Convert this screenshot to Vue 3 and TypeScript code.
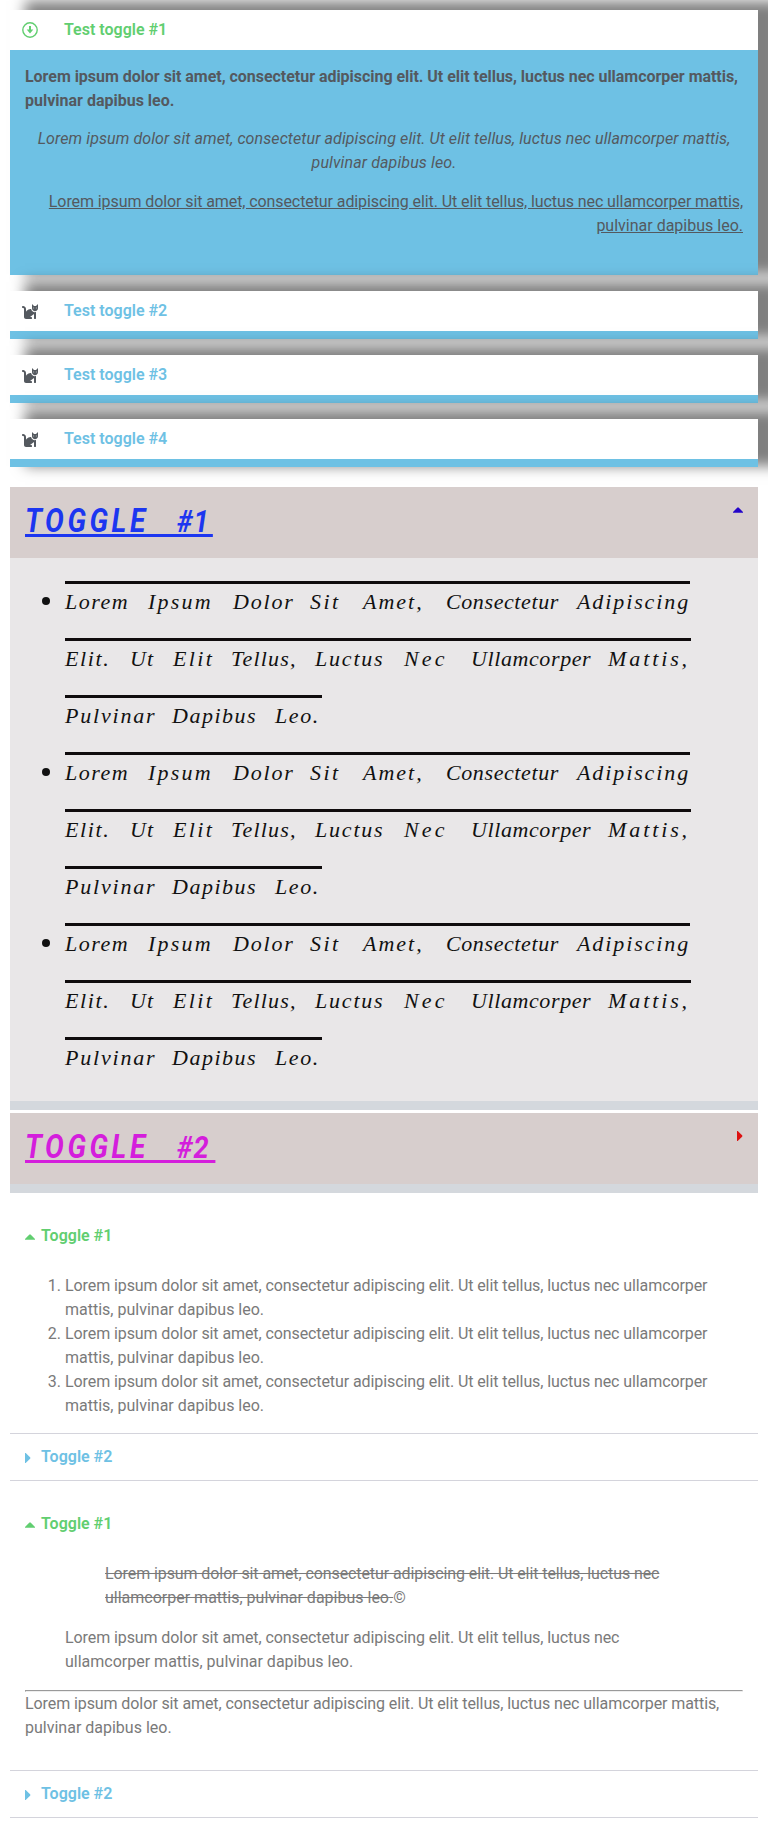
<script setup lang="ts">
const lorem =
  'Lorem ipsum dolor sit amet, consectetur adipiscing elit. Ut elit tellus, luctus nec ullamcorper mattis, pulvinar dapibus leo.'

const closed = ['Test toggle #2', 'Test toggle #3', 'Test toggle #4']

interface Word { text: string; slot: number; gap: number }
interface Line { width: number; words: Word[] }

const w = (text: string, slot: number, gap: number): Word => ({ text, slot, gap })

// slot: distance to the next word; gap: letter spacing
const lines: Line[] = [
  {
    width: 625,
    words: [w('Lorem', 83, 1.5), w('Ipsum', 85, 2.2), w('Dolor', 77, 1.8), w('Sit', 53, 2.4), w('Amet,', 83, 2), w('Consectetur', 131, 0.6), w('Adipiscing', 114, 1.9)],
  },
  {
    width: 626,
    words: [w('Elit.', 65, 1.6), w('Ut', 43, 1.2), w('Elit', 58, 2.4), w('Tellus,', 84, 1.2), w('Luctus', 89, 1.8), w('Nec', 67, 3.2), w('Ullamcorper', 137, 0.6), w('Mattis,', 83, 2.9)],
  },
  { width: 257, words: [w('Pulvinar', 107, 1.8), w('Dapibus', 103, 1.5), w('Leo.', 47, 1.6)] },
]
</script>

<template>
  <main class="page">
    <section class="shadowed">
      <article class="item">
        <header class="bar open">
          <svg class="icon" viewBox="0 0 16 16">
            <circle cx="8" cy="8" r="7.2" fill="none" stroke="currentColor" stroke-width="1.4" />
            <path d="M7 4h2v3.600h2.300L8 11.500 4.700 7.600H7z" fill="currentColor" />
          </svg>
          <span>Test toggle #1</span>
        </header>
        <div class="body">
          <p class="bold"><strong>{{ lorem }}</strong></p>
          <p class="center"><em>{{ lorem }}</em></p>
          <p class="right"><u>{{ lorem }}</u></p>
        </div>
      </article>
      <article v-for="t in closed" :key="t" class="item">
        <header class="bar">
          <svg class="icon cat" viewBox="0 0 512 512">
            <path d="M290.6 192c-20.2 0-106.8 2-162.6 86V192c0-52.900-43.100-96-96-96-17.700 0-32 14.300-32 32s14.300 32 32 32c17.600 0 32 14.400 32 32v256c0 35.300 28.700 64 64 64h176c8.800 0 16-7.200 16-16v-16c0-17.700-14.300-32-32-32h-32l128-96v144c0 8.800 7.200 16 16 16h32c8.800 0 16-7.200 16-16V289.900c-10.300 2.700-20.900 4.500-32 4.500-61.800 0-113.500-44.100-125.400-102.400zM448 96h-64l-64-64v134.400c0 53 43 96 96 96s96-43 96-96V32l-64 64zm-72 80c-8.800 0-16-7.200-16-16s7.200-16 16-16 16 7.200 16 16-7.200 16-16 16zm80 0c-8.800 0-16-7.200-16-16s7.200-16 16-16 16 7.200 16 16-7.200 16-16 16z" fill="currentColor" />
          </svg>
          <span>{{ t }}</span>
        </header>
        <div class="strip"></div>
      </article>
    </section>

    <section class="fancy">
      <article class="panel">
        <header class="head blue">
          <h2>Toggle <i>#1</i></h2>
          <svg class="mark" viewBox="0 0 10 10"><path d="M4.400 2.500h1.200L10 7v.700H0V7z" fill="#2405c9" /></svg>
        </header>
        <ul class="script">
          <li v-for="n in 3" :key="n">
            <div v-for="(line, i) in lines" :key="i" class="line">
              <div class="over" :style="{ width: line.width + 'px' }">
                <span
                  v-for="(word, j) in line.words"
                  :key="j"
                  class="word"
                  :style="{ width: word.slot + 'px', letterSpacing: word.gap + 'px' }"
                >{{ word.text }}</span>
              </div>
            </div>
          </li>
        </ul>
      </article>
      <article class="panel">
        <header class="head pink">
          <h2>Toggle <i>#2</i></h2>
          <svg class="mark side" viewBox="0 0 10 10"><path d="M4 0h.700L9.300 4.400v1.200L4.700 10H4z" fill="#dd1111" /></svg>
        </header>
      </article>
    </section>

    <section class="plain">
      <header class="title green">
        <svg class="caret" viewBox="0 0 10 10"><path d="M4.400 2.500h1.200L10 7v.700H0V7z" fill="currentColor" /></svg>Toggle #1
      </header>
      <div class="content">
        <ol>
          <li v-for="n in 3" :key="n">{{ lorem }}</li>
        </ol>
      </div>
      <header class="title ruled">
        <svg class="caret" viewBox="0 0 10 10"><path d="M0 0h.700L5.300 4.400v1.200L.700 10H0z" fill="currentColor" /></svg>Toggle #2
      </header>
    </section>

    <section class="plain">
      <header class="title green">
        <svg class="caret" viewBox="0 0 10 10"><path d="M4.400 2.500h1.200L10 7v.700H0V7z" fill="currentColor" /></svg>Toggle #1
      </header>
      <div class="content last">
        <blockquote>
          <blockquote class="text"><s>{{ lorem }}</s>©</blockquote>
          <div class="text">{{ lorem }}</div>
        </blockquote>
        <hr />
        <p>{{ lorem }}</p>
      </div>
      <header class="title ruled">
        <svg class="caret" viewBox="0 0 10 10"><path d="M0 0h.700L5.300 4.400v1.200L.700 10H0z" fill="currentColor" /></svg>Toggle #2
      </header>
    </section>
  </main>
</template>

<style>
body { margin: 0; background: #fff; }
html { overflow-x: hidden; }
</style>

<style scoped>
.page {
  box-sizing: border-box;
  height: 1828px;
  padding: 10px;
  overflow: hidden;
  font: 16px/24px Roboto, sans-serif;
  color: #7a7a7a;
}
p { margin: 0 0 14.4px; }
p::first-line,
ol li::first-line,
.text::first-line { letter-spacing: -0.09px; }
.bold::first-line { letter-spacing: -0.035px; }
p.center::first-line { letter-spacing: 0.09px; }
.center { letter-spacing: 0.12px; }

.shadowed { display: flex; flex-direction: column; gap: 16px; margin-bottom: 20px; }
.item { box-shadow: 19px -5px 13px 4px rgba(0, 0, 0, 0.5); }
.bar {
  display: flex;
  align-items: center;
  height: 40px;
  padding-left: 12px;
  background: #fff;
  color: #6ec1e4;
  font-weight: 600;
}
.bar span { line-height: 16px; margin-top: -1px; }
.bar.open { color: #61ce70; }
.icon { width: 16px; height: 16px; margin-right: 26px; }
.cat { color: #54595f; }
.body {
  box-sizing: border-box;
  height: 225px;
  padding: 15px;
  background: #6ec1e4;
  color: #54595f;
}
.strip { height: 8px; background: #6ec1e4; }
.center { text-align: center; }
.right { text-align: right; }

.fancy { display: flex; flex-direction: column; gap: 3px; margin-bottom: 20px; position: relative; }
.panel { border-bottom: 9px solid #d4d8dd; }
.head {
  display: flex;
  justify-content: space-between;
  box-sizing: border-box;
  height: 71px;
  padding: 16px 15px 0;
  background: #d7cecd;
}
.head h2 {
  margin: 0;
  height: 31px;
  border-bottom: 3px solid;
  font: italic 700 33px/36px Roboto, sans-serif;
  text-transform: uppercase;
  letter-spacing: 4.2px;
  width: 221px;
  transform: scaleX(0.85);
  transform-origin: 0 0;
  white-space: pre;
}
.head h2 i { margin-left: 21px; font-size: 32px; letter-spacing: 1px; }
.blue h2 { color: #1c36f0; }
.pink h2 { color: #d41edc; width: 224px; }
.mark { width: 10px; height: 10px; margin-top: 2px; }
.script {
  margin: 0;
  padding: 15px 15px 15px 55px;
  background: #e9e7e8;
  color: #111;
  list-style: none;
}
.script li { position: relative; }
.script li::before {
  content: '';
  position: absolute;
  left: -23px;
  top: 24px;
  width: 8px;
  height: 8px;
  border-radius: 50%;
  background: #111;
}
.line { height: 57px; padding-top: 8px; box-sizing: border-box; }
.over {
  display: flex;
  border-top: 3px solid #100c0d;
  font: italic 22px/34px 'Liberation Serif', serif;
}
.word { flex: none; padding-top: 1px; box-sizing: border-box; }

.plain { margin-bottom: 20px; }
.title {
  display: flex;
  align-items: center;
  box-sizing: border-box;
  height: 46px;
  padding: 0 15px 1px;
  font-weight: 600;
  color: #6ec1e4;
}
.green { color: #61ce70; }
.ruled { height: 48px; border: solid #d4d4dc; border-width: 1px 0; }
.caret { width: 10px; height: 10px; margin: 2px 6px 0 0; }
.content { padding: 15px; }
.last { box-sizing: border-box; height: 223px; }
ol { margin: 0; padding-left: 40px; }
blockquote { margin: 0 40px 16px; }
hr { margin: 0; border: 1px inset; color: gray; }
</style>
